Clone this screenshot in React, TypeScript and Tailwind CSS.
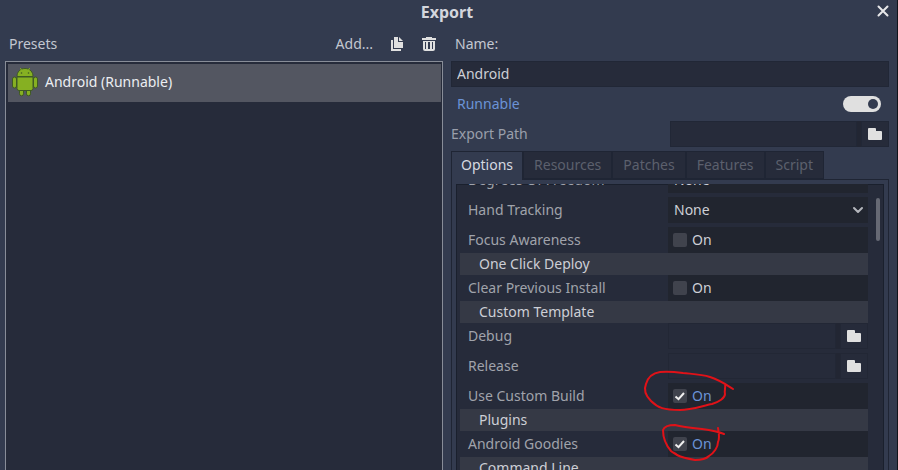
import { useState } from "react";
import type { ReactNode } from "react";

function CopyIcon() {
  return (
    <svg viewBox="0 0 16 16" className="size-4" fill="#e0e0e0" aria-hidden="true">
      <path d="M2 4h2v9h8v2H2z" />
      <path d="M5 1h4v5h5v6H5z" />
      <path d="M10 1l4 4h-4z" />
    </svg>
  );
}

function TrashIcon() {
  return (
    <svg viewBox="0 0 16 16" className="size-4" fill="#e0e0e0" aria-hidden="true">
      <path d="M5 1h6v1h4v2H1V2h4z" />
      <path
        fillRule="evenodd"
        d="M2 5h12v8a2 2 0 0 1-2 2H4a2 2 0 0 1-2-2zM4 6v7h1V6zM7 6v7h2V6zM11 6v7h1V6z"
      />
    </svg>
  );
}

function FolderIcon() {
  return (
    <svg viewBox="0 0 16 16" className="size-4" fill="#e0e0e0" aria-hidden="true">
      <path d="M2 2h6a1 1 0 0 1 1 1v2h5a1 1 0 0 1 1 1v7a1 1 0 0 1-1 1H2a1 1 0 0 1-1-1V3a1 1 0 0 1 1-1z" />
    </svg>
  );
}

function CloseIcon() {
  return (
    <svg viewBox="0 0 16 16" className="size-4" stroke="#e8e8ea" strokeWidth="2" strokeLinecap="round" aria-hidden="true">
      <path d="M3.5 3.5l9 9M12.5 3.5l-9 9" />
    </svg>
  );
}

function AndroidIcon() {
  return (
    <svg viewBox="0 0 28 30" className="h-[30px] w-7 shrink-0" aria-hidden="true">
      <g fill="#86b022" stroke="#3f5a22" strokeWidth="1">
        <path d="M8.500 22v4.800a1.700 1.700 0 0 0 4 0V23h3v3.800a1.700 1.700 0 0 0 4 0V22z" />
        <rect x="1.500" y="10" width="4" height="11" rx="2" />
        <rect x="22.500" y="10" width="4" height="11" rx="2" />
        <path d="M6 10h16v11.500a2 2 0 0 1-2 2H8a2 2 0 0 1-2-2z" />
        <path d="M6 9.500C6 5 9 1.500 14 1.500S22 5 22 9.500z" />
      </g>
      <g stroke="#86b022" strokeWidth="1" strokeLinecap="round">
        <path d="M9.500 1.500l1.200 1.800M18.500 1.500l-1.200 1.800" />
      </g>
      <circle cx="10.500" cy="6" r="0.800" fill="#3f5a22" />
      <circle cx="17.500" cy="6" r="0.800" fill="#3f5a22" />
    </svg>
  );
}

const TABS = ["Options", "Resources", "Patches", "Features", "Script"];

function Row({ label, id, children }: { label: string; id: string; children: ReactNode }) {
  return (
    <div className="grid h-[26px] shrink-0 grid-cols-[26fr_25fr] items-center">
      <label htmlFor={id} className="pl-2 text-[#a0a3ab]">
        {label}
      </label>
      {children}
    </div>
  );
}

function Section({ title }: { title: string }) {
  return <h3 className="h-[22px] shrink-0 bg-[#353945] pl-[19px] leading-[22px] text-[#cdcfd6]">{title}</h3>;
}

function Group({ children }: { children: ReactNode }) {
  return <div className="flex shrink-0 flex-col gap-1">{children}</div>;
}

function SelectRow({ label, id }: { label: string; id: string }) {
  return (
    <Row label={label} id={id}>
      <div className="relative h-[26px]">
        <select id={id} className="h-full w-full appearance-none bg-[#21252f] pl-[6px] text-[#cdcfd6] outline-none">
          <option>None</option>
          <option>Optional</option>
          <option>Required</option>
        </select>
        <svg
          viewBox="0 0 12 8"
          className="pointer-events-none absolute right-1 top-[9px] h-2 w-3"
          fill="none"
          stroke="#b4b6bc"
          strokeWidth="2"
          strokeLinecap="round"
          strokeLinejoin="round"
          aria-hidden="true"
        >
          <path d="M2 2l4 4 4-4" />
        </svg>
      </div>
    </Row>
  );
}

function CheckRow({ label, id, initial = false, children }: { label: string; id: string; initial?: boolean; children?: ReactNode }) {
  const [on, setOn] = useState(initial);
  return (
    <Row label={label} id={id}>
      <div className="relative flex h-[26px] items-center gap-[5px] bg-[#21252f] pl-[5px]">
        <span className="grid size-[14px] place-items-center">
          <input
            id={id}
            type="checkbox"
            checked={on}
            onChange={(e) => setOn(e.target.checked)}
            className="col-start-1 row-start-1 size-[14px] appearance-none rounded-[2px] bg-[#40434d]"
          />
          {on && (
            <svg
              viewBox="0 0 14 14"
              className="pointer-events-none col-start-1 row-start-1 size-[14px]"
              fill="none"
              stroke="#f0f0f0"
              strokeWidth="2"
              aria-hidden="true"
            >
              <path d="M2.500 7.500l3 2.700L11 4" />
            </svg>
          )}
        </span>
        <span className={on ? "text-[#6b93d6]" : "text-[#cdcfd6]"}>On</span>
        {children}
      </div>
    </Row>
  );
}

function PathRow({ label, id }: { label: string; id: string }) {
  return (
    <Row label={label} id={id}>
      <div className="flex h-[26px] min-w-0 bg-[#222633]">
        <input id={id} type="text" className="mr-1 h-full min-w-0 flex-1 border border-[#222735] bg-[#262b3a] px-1 text-[#cdcfd6] outline-none" />
        <button type="button" aria-label={"Browse " + label} className="grid w-7 place-items-center border border-[#222735] bg-[#262b3a]">
          <FolderIcon />
        </button>
      </div>
    </Row>
  );
}

function Scribble({ d }: { d: string }) {
  return (
    <svg
      viewBox="-30 -20 110 60"
      className="pointer-events-none absolute -left-[30px] -top-5 z-10 h-[60px] w-[110px]"
      fill="none"
      stroke="#e01218"
      strokeWidth="2"
      strokeLinecap="round"
      strokeLinejoin="round"
      aria-hidden="true"
    >
      <path d={d} />
    </svg>
  );
}

export default function App() {
  const [tab, setTab] = useState("Options");
  return (
    <div className="flex h-screen flex-col overflow-hidden border-r border-[#11141b] bg-[#333b4f] font-['Noto_Sans',sans-serif] text-[14px] leading-5 text-[#c3c7d1]">
      <header className="grid h-6 shrink-0 grid-cols-[1fr_auto_1fr] items-center pl-[3px] pr-[6px]">
        <h1 className="col-start-2 text-[16px] font-bold text-[#d3d6dd]">Export</h1>
        <button type="button" aria-label="Close" className="justify-self-end pb-[2px]">
          <CloseIcon />
        </button>
      </header>

      <main className="flex min-h-0 flex-1 gap-2 pl-[5px] pr-2">
        <section className="flex min-w-0 flex-1 flex-col">
          <div className="flex h-[37px] shrink-0 items-center pl-1 pr-[6px] pt-[3px]">
            <h2 className="flex-1">Presets</h2>
            <button type="button" className="mr-4">Add...</button>
            <button type="button" aria-label="Duplicate preset" className="mr-4">
              <CopyIcon />
            </button>
            <button type="button" aria-label="Delete preset">
              <TrashIcon />
            </button>
          </div>
          <ul className="flex-1 border border-b-0 border-[#888d98] bg-[#262b3a] pl-[2px] pr-px pt-[2px]">
            <li>
              <button type="button" className="flex h-[38px] w-full items-center gap-[6px] bg-[#535661] pb-[2px] pl-[3px] text-left text-[#eceef2]">
                <AndroidIcon />
                Android (Runnable)
              </button>
            </li>
          </ul>
        </section>

        <section className="flex min-w-0 flex-1 flex-col">
          <label htmlFor="preset-name" className="flex h-[37px] shrink-0 items-center pl-1 pt-[3px]">
            Name:
          </label>
          <input
            id="preset-name"
            type="text"
            defaultValue="Android"
            className="h-[26px] w-full shrink-0 border border-[#212736] bg-[#262b3a] px-[5px] pb-[2px] text-[#cdcfd6] outline-none"
          />
          <div className="mt-1 flex h-[26px] shrink-0 items-center justify-between pl-[6px] pr-2">
            <label htmlFor="runnable" className="text-[#6b93d6]">
              Runnable
            </label>
            <input
              id="runnable"
              type="checkbox"
              role="switch"
              defaultChecked
              className="flex h-4 w-[38px] appearance-none items-center rounded-full bg-[#e0e0e0] px-[3px] before:size-[10px] before:rounded-full before:bg-[#333b4f] before:content-[''] checked:justify-end"
            />
          </div>
          <div className="mt-1 grid h-[26px] shrink-0 grid-cols-2 items-center">
            <label htmlFor="export-path" className="text-[#9a9fab]">
              Export Path
            </label>
            <div className="flex h-[26px] min-w-0 bg-[#222633]">
              <input id="export-path" type="text" className="mr-1 h-full min-w-0 flex-1 border border-[#212736] bg-[#262b3a] px-1 outline-none" />
              <button type="button" aria-label="Browse export path" className="grid w-7 place-items-center border border-[#212736] bg-[#262b3a]">
                <FolderIcon />
              </button>
            </div>
          </div>

          <div role="tablist" className="mt-1 flex h-7 shrink-0">
            {TABS.map((name) => (
              <button
                key={name}
                type="button"
                role="tab"
                aria-selected={tab === name}
                onClick={() => setTab(name)}
                className={
                  tab === name
                    ? "z-10 -mb-px border border-b-0 border-[#1f2534] bg-[#333b4f] px-[9px] pb-[2px] text-[#d6d9e0]"
                    : "border border-[#1f2534] bg-[#262b3a] px-[10px] text-[#5c606d]"
                }
              >
                {name}
              </button>
            ))}
          </div>

          <div role="tabpanel" className="flex min-h-0 flex-1 flex-col border border-b-0 border-[#1f2534] px-1 pt-1">
            <div className="flex min-h-0 flex-1 border border-b-0 border-[#1a202d] bg-[#262b3a] px-[3px]">
              <div className="-mt-px min-w-0 flex-1 overflow-hidden">
                <div className="-mt-[17px] flex flex-col">
                  <Group>
                    <SelectRow label="Degrees Of Freedom" id="dof" />
                    <SelectRow label="Hand Tracking" id="hand" />
                    <CheckRow label="Focus Awareness" id="focus" />
                  </Group>
                  <Section title="One Click Deploy" />
                  <CheckRow label="Clear Previous Install" id="clear" />
                  <Section title="Custom Template" />
                  <Group>
                    <PathRow label="Debug" id="debug" />
                    <PathRow label="Release" id="release" />
                    <CheckRow label="Use Custom Build" id="custom-build" initial>
                      <Scribble d="M65 6C60 3 54-2 42-6C33-9 24-9 15-10C8-11 0-12-8-11C-15-10-20-6-22 1C-25 8-22 13-17 18C-10 25-4 27 12 27C23 27 34 23 44 21C51 19 57 15 57 11C56 8 58 4 57 1" />
                    </CheckRow>
                  </Group>
                  <Section title="Plugins" />
                  <CheckRow label="Android Goodies" id="goodies" initial>
                    <Scribble d="M56 3C49 0 42-1 34-2C24-3 14-4 7-6C0-6-4-4-5-1C-5 7-3 13 3 20C5 22 7 22 9 24C15 27 21 28 27 29C33 29 38 28 41 25C46 22 50 16 50 11C52 7 51 3 50-3" />
                  </CheckRow>
                  <Section title="Command Line" />
                </div>
              </div>
              <div className="ml-2 flex w-1 flex-col pt-[13px]">
                <div className="h-[43px] w-1 rounded-full bg-[#666974]" />
              </div>
            </div>
          </div>
        </section>
      </main>
    </div>
  );
}
